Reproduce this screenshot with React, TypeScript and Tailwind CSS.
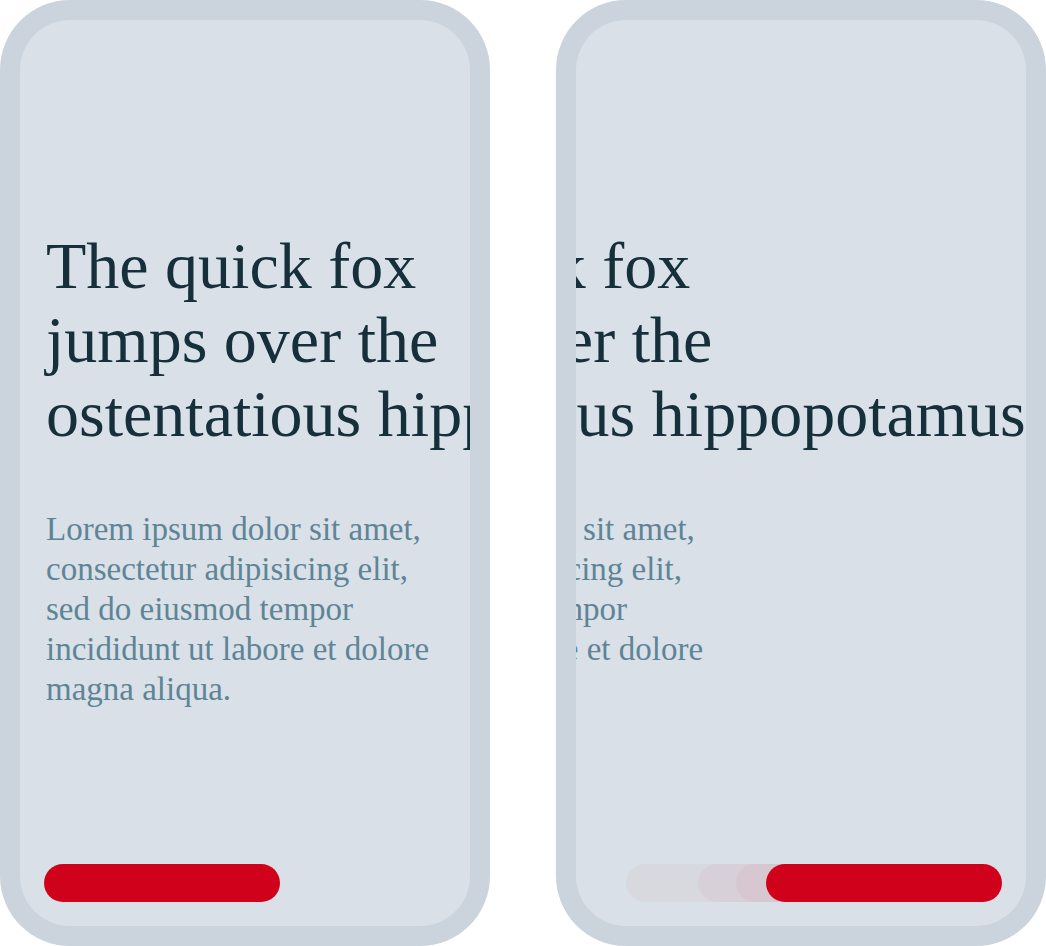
import { useEffect, useRef } from "react";

const serif = { fontFamily: '"Liberation Serif", "Times New Roman", serif' };

type SlideProps = {
  atEnd?: boolean;
};

const Slide = ({ atEnd }: SlideProps) => {
  const scroller = useRef<HTMLDivElement>(null);
  const title = useRef<HTMLHeadingElement>(null);

  // second slide sits scrolled so the longest title line meets the right edge
  useEffect(() => {
    const box = scroller.current;
    const h = title.current;
    if (!box || !h) return;
    box.scrollLeft = atEnd ? h.offsetLeft + h.offsetWidth - box.clientWidth : 0;
  }, [atEnd]);

  return (
    <div className="w-[490px] h-[946px] shrink-0 rounded-[70px] bg-[#cbd3dc] p-5">
      <div className="flex h-full flex-col overflow-hidden rounded-[50px] bg-[#d9e0e7]">
        <div ref={scroller} className="relative min-h-0 flex-1 overflow-hidden px-[26px] pt-[209px]" style={serif}>
          <h1 ref={title} className="w-max whitespace-nowrap text-[66px] leading-[74px] font-normal text-[#15303a]">
            The quick fox
            <br />
            jumps over the
            <br />
            ostentatious hippopotamus
          </h1>
          <p className="mt-[58px] text-[33px] leading-[40px] text-[#5e8596]">
            Lorem ipsum dolor sit amet, consectetur adipisicing elit, sed do eiusmod tempor incididunt ut
            labore et dolore magna aliqua.
          </p>
        </div>

        <div className={`flex px-6 pb-6 ${atEnd ? "justify-end" : "justify-start"}`}>
          <div className="relative h-[38px] w-[236px]">
            {atEnd && (
              <>
                <div className="absolute top-0 left-[-140px] h-[38px] w-[236px] rounded-full bg-[#d0021b] opacity-[0.035]" />
                <div className="absolute top-0 left-[-68px] h-[38px] w-[236px] rounded-full bg-[#d0021b] opacity-[0.035]" />
                <div className="absolute top-0 left-[-30px] h-[38px] w-[236px] rounded-full bg-[#d0021b] opacity-[0.04]" />
              </>
            )}
            <div className="relative h-[38px] w-[236px] rounded-full bg-[#d0021b]" />
          </div>
        </div>
      </div>
    </div>
  );
};

export default function App() {
  return (
    <div className="flex w-[1046px] gap-[66px] bg-white">
      <Slide />
      <Slide atEnd />
    </div>
  );
}
